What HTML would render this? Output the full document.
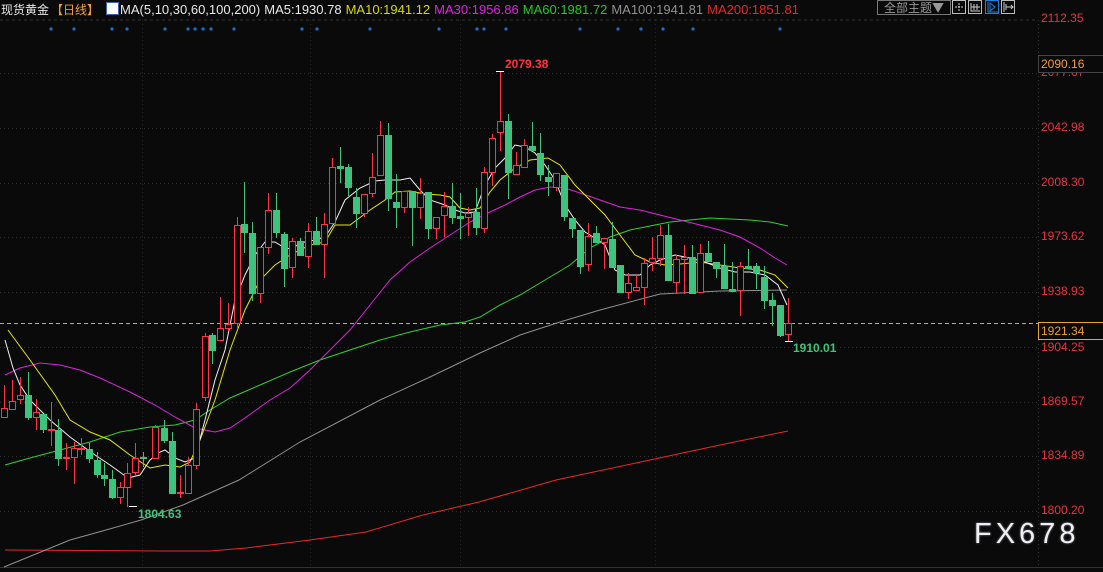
<!DOCTYPE html>
<html><head><meta charset="utf-8"><style>
html,body{margin:0;padding:0;background:#0a0a0a;}
#w{position:relative;width:1103px;height:572px;overflow:hidden;background:#0a0a0a;font-family:"Liberation Sans","Noto Sans CJK SC",sans-serif;}
.hd{position:absolute;top:1px;left:1px;font-size:13px;white-space:nowrap;color:#e8e8e8;}
.hd span{margin-right:4px}
.ax{position:absolute;left:1041px;font-size:12px;color:#e8323f;}
</style></head><body><div id="w">
<svg id="s" width="1103" height="572" style="position:absolute;left:0;top:0"></svg>
<div class="hd"><span style="margin-right:2px;font-size:12px">现货黄金</span><span style="color:#f0a030;margin-right:7px;font-size:12px">【日线】</span><span style="display:inline-block;width:11px;height:11px;background:#fff;border:1px solid #4060c0;vertical-align:-1px;margin-right:1px"></span><span>MA(5,10,30,60,100,200)</span><span>MA5:1930.78</span><span style="color:#d8d800">MA10:1941.12</span><span style="color:#e020e0">MA30:1956.86</span><span style="color:#20c820">MA60:1981.72</span><span style="color:#909090">MA100:1941.81</span><span style="color:#e82828">MA200:1851.81</span></div>
<div style="position:absolute;left:877px;top:0;width:72px;height:13px;border:1px solid #777;color:#999;font-size:12px;line-height:13px;text-align:center;font-family:'Noto Sans CJK SC',sans-serif;overflow:hidden">全部主题▼</div>
<div class="ax" style="top:11px">2112.35</div>
<div class="ax" style="top:65px">2077.67</div>
<div class="ax" style="top:120px">2042.98</div>
<div class="ax" style="top:175px">2008.30</div>
<div class="ax" style="top:229px">1973.62</div>
<div class="ax" style="top:284px">1938.93</div>
<div class="ax" style="top:340px">1904.25</div>
<div class="ax" style="top:394px">1869.57</div>
<div class="ax" style="top:448px">1834.89</div>
<div class="ax" style="top:503px">1800.20</div>
<div style="position:absolute;left:1038px;top:55px;width:65px;height:16px;background:#0a0a0a;border:1px solid #444;color:#f0a030;font-size:12px;line-height:16px;padding-left:2px">2090.16</div>
<div style="position:absolute;left:1038px;top:322px;width:65px;height:16px;background:#0a0a0a;border:1px solid #f0a030;color:#f0a030;font-size:12px;line-height:16px;padding-left:2px">1921.34</div>
<div style="position:absolute;left:505px;top:57px;color:#ff3040;font-size:12px;font-weight:bold">2079.38</div>
<div style="position:absolute;left:138px;top:507px;color:#3cc47c;font-size:12px;font-weight:bold">1804.63</div>
<div style="position:absolute;left:793px;top:341px;color:#3cc47c;font-size:12px;font-weight:bold">1910.01</div>
<div style="position:absolute;left:974px;top:518px;color:#f0f0f0;font-size:29px;letter-spacing:4px;text-shadow:0 0 2px #889">FX678</div>
</div>
<script>
var s=document.getElementById('s'),h='';
function L(x1,y1,x2,y2,c,d,w){h+='<line x1="'+x1+'" y1="'+y1+'" x2="'+x2+'" y2="'+y2+'" stroke="'+c+'" stroke-width="'+(w||1)+'"'+(d?' stroke-dasharray="'+d+'"':'')+'/>';}
L(0,20,1038,20,'#333','3 3');
[73,128,183,237,292,347,402,456,511].forEach(function(y){L(0,y+.5,1038,y+.5,'#2e2e2e','1 3');});
[142,310,460,655].forEach(function(x){L(x+.5,20,x+.5,567,'#262626','1 3');});
L(1038.5,20,1038.5,567,'#333','1 3');
L(0,567.5,1103,567.5,'#333');
[51,74,112,127,165,188,195,203,211,234,302,317,370,439,477,484,506,580,618,641,663,693,780].forEach(function(x){h+='<circle cx="'+x+'" cy="29" r="1.6" fill="#1a70c8"/>';});
L(0,323.5,1038,323.5,'#f0a030','4 3');
function P(pts,c){h+='<polyline fill="none" stroke="'+c+'" stroke-width="1" points="'+pts.map(function(p){return p.join(',')}).join(' ')+'"/>';}
P([[5,550],[160,551],[210,551],[246,548],[310,540],[366,532],[423,515],[479,502],[556,480],[650,460],[720,445],[788,431]],'#e82828');
P([[4,567],[70,540],[106,530],[141,520],[183,505],[239,480],[300,442],[380,400],[430,377],[480,353],[520,335],[560,322],[600,310],[660,294],[720,291],[787,290]],'#909090');
P([[5,465],[30,458],[60,450],[90,442],[120,432],[150,427],[175,425],[195,420],[210,410],[230,398],[260,385],[290,372],[320,360],[350,350],[380,340],[410,332],[440,325],[465,322],[480,317],[500,305],[520,295],[545,280],[570,265],[590,248],[610,237],[630,230],[650,226],[670,222],[690,220],[710,218],[730,219],[750,220],[770,222],[788,226]],'#30d030');
P([[5,375],[20,368],[40,363],[60,365],[80,370],[100,378],[130,392],[155,405],[175,417],[195,428],[215,432],[230,428],[245,418],[270,400],[290,388],[310,370],[330,350],[350,330],[370,305],[390,280],[410,262],[430,248],[450,235],[470,222],[490,212],[505,205],[520,197],[535,190],[550,187],[565,188],[580,193],[600,200],[620,207],[640,210],[660,215],[680,220],[700,225],[720,230],[740,237],[760,248],[775,258],[787,265]],'#e020e0');
P([[8,330],[30,360],[55,395],[70,420],[90,432],[110,440],[130,455],[150,468],[165,465],[180,467],[190,462],[200,440],[215,400],[230,350],[245,310],[260,280],[275,265],[290,255],[310,245],[325,242],[335,225],[350,225],[370,210],[385,200],[395,192],[410,191],[425,194],[440,195],[450,197],[460,208],[470,210],[480,208],[490,192],[500,180],[515,168],[530,160],[548,158],[560,165],[575,185],[590,200],[605,215],[620,235],[635,255],[650,262],[665,265],[680,264],[700,262],[720,265],[740,268],[760,270],[775,275],[788,288]],'#e8e800');
P([[5,340],[13,368],[20,385],[30,400],[50,420],[70,437],[95,455],[110,465],[128,478],[140,475],[150,460],[160,452],[165,450],[175,458],[185,462],[195,458],[205,420],[215,380],[225,350],[235,300],[245,275],[255,255],[265,242],[275,242],[285,248],[292,249],[300,243],[315,240],[325,237],[335,222],[345,200],[360,188],[375,181],[385,180],[400,180],[410,178],[420,190],[430,200],[445,205],[455,210],[465,213],[475,212],[485,185],[495,168],[505,158],[515,145],[525,147],[535,153],[545,165],[555,180],[565,205],[575,220],[585,232],[595,238],[605,245],[615,270],[625,275],[640,275],[650,265],[660,260],[675,255],[690,258],[705,262],[720,268],[735,272],[750,272],[765,275],[778,285],[787,305]],'#f0f0f0');
var C=[
[4,408,417,385,417,1],[12,401,409,380,409,1],[20,395,399,377,403,1],[28,395,417,372,419,0],[36,412,417,399,429,1],[43,414,429,414,432,0],[51,429,430,402,445,1],[58,430,458,419,465,0],[66,457,458,443,469,1],[74,448,457,442,483,1],[81,448,449,438,454,1],[89,449,458,443,462,0],[97,460,474,452,477,0],[104,475,478,463,485,0],[112,479,497,470,498,0],[120,487,497,482,503,1],[127,473,487,463,506,1],[135,458,472,443,475,1],[143,457,458,452,466,0],[155,427,458,425,458,1],[164,428,440,420,442,0],[172,441,493,432,493,0],[180,492,493,475,497,1],[188,465,493,457,493,1],[196,409,465,403,468,1],
[205,336,397,333,400,1],[212,335,350,333,363,0],[220,328,340,297,340,1],[228,324,328,303,330,1],[237,225,323,217,327,1],[244,224,232,182,252,0],[252,233,293,222,300,0],[260,247,293,247,302,1],[268,210,247,193,253,1],[276,210,232,193,237,0],[284,234,268,232,286,0],[292,241,267,238,277,1],[300,241,255,238,255,0],[308,231,256,223,267,1],[316,231,244,217,244,0],[324,224,244,213,277,1],[332,167,223,158,223,1],[340,166,168,147,182,0],[348,167,187,164,195,0],[356,197,213,188,227,0],[364,194,213,194,216,1],[372,177,193,153,196,1],[380,135,175,121,175,1],[388,135,198,123,210,0],[396,202,207,174,227,0],[404,191,207,191,212,1],[412,191,207,191,245,0],[420,193,207,178,218,1],[428,192,228,192,238,0],[436,217,228,217,238,1],[444,206,215,192,236,1],[452,206,217,183,223,0],[460,216,218,193,238,0],[468,213,217,207,235,1],[476,212,227,188,234,0],[484,172,228,167,232,1],[492,138,172,134,185,1],[500,121,132,72,150,1],[508,121,172,114,198,0],[516,165,174,152,174,1],[524,145,167,139,167,1],[532,146,150,122,150,0],[540,153,174,133,180,0],[548,177,181,165,195,0],[556,173,187,173,190,1],[564,175,216,175,220,0],[572,218,228,218,237,0],[580,230,266,230,273,0],[588,236,264,223,270,1],[596,233,242,226,242,0],[604,238,242,238,268,1],[612,239,267,222,267,0],[620,265,292,265,292,0],[628,283,292,273,298,1],[636,287,290,275,290,1],[644,263,287,258,304,1],[652,258,262,237,270,1],[660,235,258,225,265,1],[668,235,280,224,280,0],[676,259,282,255,293,1],[684,257,259,245,293,1],[692,257,293,245,293,0],[700,253,292,244,292,1],[708,253,261,241,261,0],[716,262,268,262,277,0],[724,266,288,244,288,0],[732,289,291,262,291,0],[740,266,290,262,315,1],[748,266,268,249,268,0],[756,266,272,263,288,0],[764,277,300,266,308,0],[772,300,305,293,325,0],[780,305,335,305,336,0],[788,323,334,298,340,1]];
C.forEach(function(c){var x=c[0]+.5,col=c[5]?'#ff3448':'#3cc47c';
L(x,c[3],x,c[4]+1,col);
if(c[5]){h+='<rect x="'+(c[0]-2.5)+'" y="'+(c[1]+.5)+'" width="6" height="'+Math.max(1,c[2]-c[1])+'" fill="#0a0a0a" stroke="'+col+'" stroke-width="1"/>';}
else{h+='<rect x="'+(c[0]-3)+'" y="'+c[1]+'" width="7" height="'+Math.max(1.5,c[2]-c[1]+1)+'" fill="'+col+'"/>';}
});
L(129,506.5,137,506.5,'#fff');L(496,71.5,504,71.5,'#fff');L(785,341.5,793,341.5,'#fff');
[[952,'#bbb'],[968,'#bbb'],[985,'#1a80e0'],[1001,'#bbb']].forEach(function(b,i){h+='<rect x="'+(b[0]+.5)+'" y="0.5" width="13" height="13" fill="none" stroke="'+b[1]+'"/>';});
h+='<path d="M959 3v8M955 7h8" stroke="#ccc" stroke-dasharray="2 1"/>';
h+='<path d="M971 3v8h9M974 4v6M977 4v6M971 7h9" stroke="#ccc" fill="none"/>';
h+='<path d="M988 2v10h10M990 3l5 4-5 4z" stroke="#1a80e0" fill="none"/>';
h+='<path d="M1004 2v10M1006 4v6M1006 7h7M1011 5l2 2-2 2" stroke="#ccc" fill="none"/>';
s.innerHTML=h;
</script>
</body></html>
